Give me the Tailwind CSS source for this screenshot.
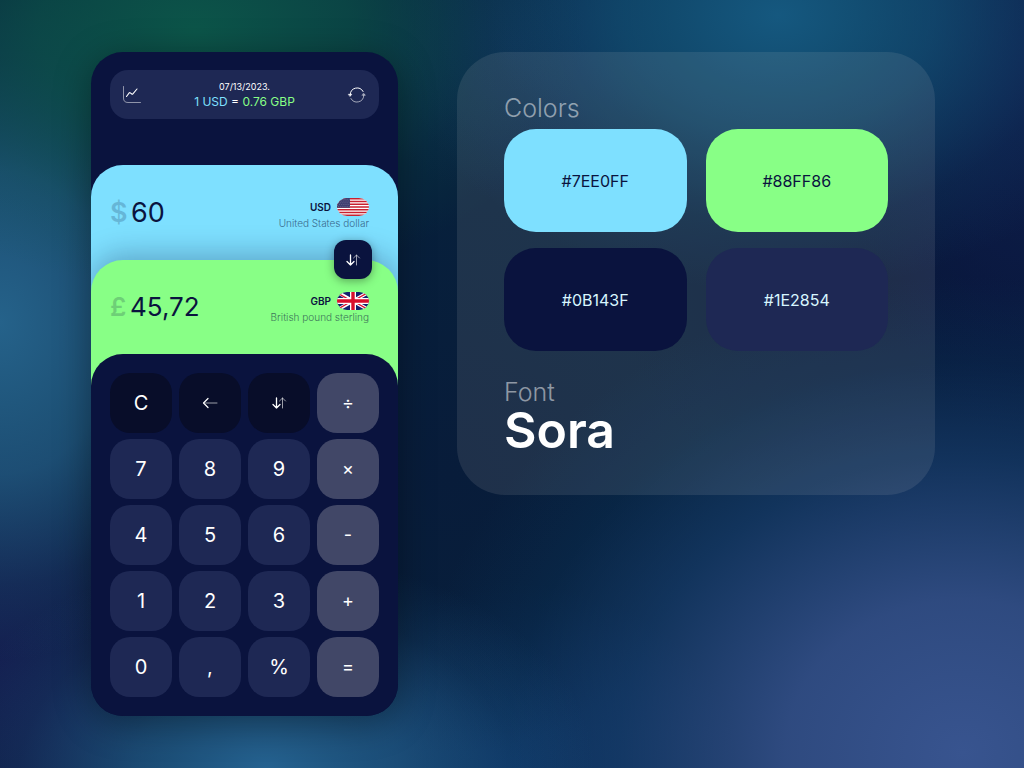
<!DOCTYPE html>
<html lang="en">
<head>
<meta charset="utf-8">
<meta name="viewport" content="width=device-width, initial-scale=1">
<title>Currency converter</title>
<script src="https://cdn.jsdelivr.net/npm/@tailwindcss/browser@4"></script>
</head>
<body class="min-h-screen font-['Inter','Liberation_Sans',sans-serif] text-white bg-[#07203c] bg-[radial-gradient(ellipse_38%_34%_at_19%_4%,#0c5549_0%,#0c5549b0_40%,#0c554930_75%,transparent_100%),radial-gradient(ellipse_38%_36%_at_76%_2%,#15587f_0%,#145a80a0_40%,#145a8028_75%,transparent_100%),radial-gradient(ellipse_26%_44%_at_0%_42%,#25628a_0%,#25628ab0_45%,#25628a30_78%,transparent_100%),radial-gradient(ellipse_32%_28%_at_26%_100%,#256290_0%,#256290a0_40%,#25629028_75%,transparent_100%),radial-gradient(ellipse_54%_62%_at_94%_98%,#38548f_0%,#345089e0_32%,#1a437590_62%,#0c3a6240_82%,transparent_100%),radial-gradient(ellipse_18%_34%_at_0%_86%,#141f50_0%,#141f50a0_50%,transparent_100%),radial-gradient(ellipse_18%_50%_at_100%_8%,#0e1c4a_0%,#0e1c4a90_50%,transparent_100%),radial-gradient(ellipse_36%_36%_at_96%_36%,#071638_0%,#07163890_50%,transparent_100%),radial-gradient(ellipse_26%_36%_at_44%_62%,#081c3a_0%,transparent_100%),radial-gradient(ellipse_22%_24%_at_50%_100%,#0d3262_0%,transparent_100%),radial-gradient(ellipse_16%_20%_at_50%_6%,#0d2650_0%,transparent_100%)]">
<main class="flex items-start gap-[59px] pt-[52px] pb-[52px] pl-[91px] pr-[89px]">

  <section aria-label="Converter" class="w-[307px] shrink-0 overflow-hidden rounded-[32px] bg-[#0a133e] shadow-[0_6px_36px_rgba(0,0,0,0.35)]">
    <header class="px-[19px] pt-[18px] pb-[46px]">
      <div class="flex h-[49px] items-center justify-between rounded-[18px] bg-[#1e2854] px-3">
        <button type="button" aria-label="Rate chart" class="size-5">
          <svg viewBox="0 0 20 20" class="size-5" fill="none" stroke="#fff" stroke-linecap="round" stroke-linejoin="round">
            <path d="M1.500 1.500v11.500q0 4.500 4.500 4.500h12.500" stroke-opacity=".5"/>
            <path d="M4.500 11.500l2.700-3.600q.5-.6 1.100-.1l1.500 1.200q.6.500 1.100-.1l4.100-4.900" stroke-width="1.100"/>
          </svg>
        </button>
        <div class="text-center">
          <p class="text-[9px] leading-[14px]">07/13/2023.</p>
          <p class="text-xs leading-[15px]"><span class="text-[#7ee0ff]">1 USD</span> = <span class="text-[#88ff86]">0.76 GBP</span></p>
        </div>
        <button type="button" aria-label="Refresh rate" class="size-5">
          <svg viewBox="0 0 20 20" class="size-5" fill="none" stroke="#fff" stroke-linecap="round" stroke-linejoin="round">
            <path d="M3.200 9.500a6.900 6.900 0 0 1 12.900-3"/>
            <path d="M1.600 9.300h3.200l-1.600 1.900z" fill="#fff" stroke-width=".6"/>
            <g stroke-opacity=".6"><path d="M16.800 10.500a6.900 6.900 0 0 1-12.900 3"/><path d="M15.200 10.300h3.200l-1.600-1.900z" fill="#fff" fill-opacity=".6" stroke-width=".6"/></g>
          </svg>
        </button>
      </div>
    </header>

    <div class="relative -mb-10 flex items-start justify-between rounded-t-[32px] bg-[#7ee0ff] px-[19px] pt-8 pb-[71px] text-[#0a133e]">
      <label for="amount" class="flex h-8 items-center text-[27px] leading-8"><span class="w-[21px] font-semibold opacity-20">$</span><input id="amount" value="60" class="w-[90px] bg-transparent outline-none"></label>
      <div class="pr-[10px] text-right">
        <div class="flex h-5 items-center justify-end gap-[6px] text-[10px] font-semibold">USD
          <svg viewBox="0 0 32 18" class="h-[18px] w-8" aria-label="Flag of the United States">
            <defs><clipPath id="pill"><rect width="32" height="18" rx="10" ry="9"/></clipPath></defs>
            <g clip-path="url(#pill)"><path fill="#fff" d="M0 0h32v18H0z"/>
            <path stroke="#c8202f" stroke-width="1.385" d="M0 .69h32M0 3.460h32M0 6.230h32M0 9h32M0 11.770h32M0 14.540h32M0 17.310h32"/>
            <path fill="#3c3b6e" d="M0 0h13v9.700H0z"/>
            <path stroke="#fff" stroke-opacity=".5" stroke-width=".6" stroke-dasharray=".7 1.200" d="M1 1.300h12M2 3h11M1 4.800h12M2 6.600h11M1 8.400h12"/></g>
          </svg>
        </div>
        <p class="text-[10px] leading-3 font-light opacity-60">United States dollar</p>
      </div>
    </div>

    <div class="relative rounded-t-[32px] bg-[#88ff86] text-[#0a133e] shadow-[0_-6px_28px_rgba(10,19,62,0.28)] -mb-8">
      <button type="button" aria-label="Swap currencies" class="absolute -top-5 right-[26px] flex h-[39px] w-[38px] items-center justify-center rounded-xl bg-[#0a133e] shadow-[0_2px_10px_rgba(0,0,0,0.35)]">
        <svg viewBox="0 0 16 16" class="size-4" fill="none" stroke="#fff" stroke-linecap="round" stroke-linejoin="round">
          <path d="M5.500 3v10M2 9.500l3.500 3.500 3.500-3.500" stroke-width="1.300"/><path d="M11.500 13V3M8.500 6l3-3 3 3" stroke-opacity=".6"/>
        </svg>
      </button>
      <div class="flex items-start justify-between px-[19px] pt-[31px] pb-[63px]">
        <p class="flex h-8 items-center text-[26px] leading-8"><span class="w-[20px] font-semibold opacity-20">£</span><output for="amount">45,72</output></p>
        <div class="pr-[10px] text-right">
          <div class="flex h-5 items-center justify-end gap-[6px] text-[10px] font-semibold">GBP
            <svg viewBox="0 0 32 18" class="h-[18px] w-8" aria-label="Flag of the United Kingdom">
              <g clip-path="url(#pill)"><path fill="#14206e" d="M0 0h32v18H0z"/>
              <path stroke="#fff" stroke-width="3.600" d="M0 0l32 18M32 0L0 18"/>
              <path stroke="#d80f2c" stroke-width="1.400" d="M0 .8l16 9M16 9l16 9M32 0L16 9M16 8.500L0 17.500"/>
              <path stroke="#fff" stroke-width="6" d="M16 0v18M0 9h32"/>
              <path stroke="#d80f2c" stroke-width="3.400" d="M16 0v18M0 9h32"/></g>
            </svg>
          </div>
          <p class="text-[10px] leading-3 font-light opacity-60">British pound sterling</p>
        </div>
      </div>
    </div>

    <div class="relative grid auto-rows-[60px] grid-cols-4 gap-x-[7px] gap-y-[6px] rounded-t-[32px] bg-[#0a133e] p-[19px] text-xl">
      <button type="button" class="rounded-[20px] bg-[#080d29]">C</button>
      <button type="button" aria-label="Backspace" class="flex items-center justify-center rounded-[20px] bg-[#080d29]">
        <svg viewBox="0 0 16 16" class="size-4" fill="none" stroke="#fff" stroke-linecap="round" stroke-linejoin="round"><path d="M2 8h13" stroke-opacity=".6"/><path d="M6 3.500L1.500 8 6 12.500" stroke-width="1.200"/></svg>
      </button>
      <button type="button" aria-label="Swap" class="flex items-center justify-center rounded-[20px] bg-[#080d29]">
        <svg viewBox="0 0 16 16" class="size-4" fill="none" stroke="#fff" stroke-linecap="round" stroke-linejoin="round"><path d="M5.500 3v10M2 9.500l3.500 3.500 3.500-3.500" stroke-width="1.300"/><path d="M11.500 13V3M8.500 6l3-3 3 3" stroke-opacity=".6"/></svg>
      </button>
      <button type="button" class="rounded-[20px] bg-[#414767] text-lg">÷</button>
      <button type="button" class="rounded-[20px] bg-[#1e2854]">7</button>
      <button type="button" class="rounded-[20px] bg-[#1e2854]">8</button>
      <button type="button" class="rounded-[20px] bg-[#1e2854]">9</button>
      <button type="button" class="rounded-[20px] bg-[#414767] text-lg">×</button>
      <button type="button" class="rounded-[20px] bg-[#1e2854]">4</button>
      <button type="button" class="rounded-[20px] bg-[#1e2854]">5</button>
      <button type="button" class="rounded-[20px] bg-[#1e2854]">6</button>
      <button type="button" class="rounded-[20px] bg-[#414767] text-lg">-</button>
      <button type="button" class="rounded-[20px] bg-[#1e2854]">1</button>
      <button type="button" class="rounded-[20px] bg-[#1e2854]">2</button>
      <button type="button" class="rounded-[20px] bg-[#1e2854]">3</button>
      <button type="button" class="rounded-[20px] bg-[#414767] text-lg">+</button>
      <button type="button" class="rounded-[20px] bg-[#1e2854]">0</button>
      <button type="button" class="rounded-[20px] bg-[#1e2854]">,</button>
      <button type="button" class="rounded-[20px] bg-[#1e2854]">%</button>
      <button type="button" class="rounded-[20px] bg-[#414767] text-lg">=</button>
    </div>
  </section>

  <section aria-label="Style guide" class="min-w-0 flex-1 rounded-[48px] bg-[#c8c8c8]/12 px-[47px] pt-10 pb-[41px]">
    <h2 class="text-[25px] leading-8 font-light text-white/50">Colors</h2>
    <div class="mt-[5px] grid auto-rows-[103px] grid-cols-2 gap-x-[19px] gap-y-4 text-base text-[#0a133e]">
      <div class="flex items-center justify-center rounded-[32px] bg-[#7ee0ff]">#7EE0FF</div>
      <div class="flex items-center justify-center rounded-[32px] bg-[#88ff86]">#88FF86</div>
      <div class="flex items-center justify-center rounded-[32px] bg-[#0a133e] text-[#d8f6ff]">#0B143F</div>
      <div class="flex items-center justify-center rounded-[32px] bg-[#1e2854] text-[#d8f6ff]">#1E2854</div>
    </div>
    <h2 class="mt-[27px] text-[25px] leading-7 font-light text-white/50">Font</h2>
    <p class="text-[50px] leading-[48px] font-semibold">Sora</p>
  </section>
</main>
</body>
</html>
